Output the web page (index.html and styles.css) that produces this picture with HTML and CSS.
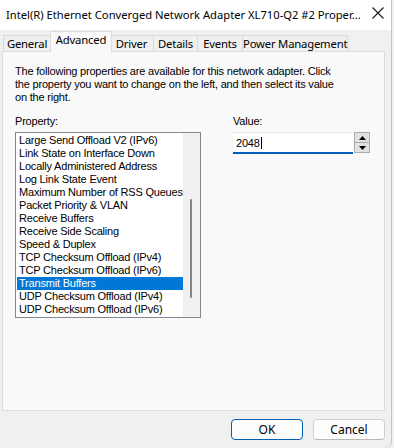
FILE: index.html
```html
<!DOCTYPE html>
<html lang="en">
<head>
    <meta charset="UTF-8">
    <title>Adapter Properties</title>
    <link rel="stylesheet" href="styles.css">
</head>
<body>
    <div class="window">
        <!-- Barra de titulo -->
        <div class="titlebar">
            <span class="title">Intel(R) Ethernet Converged Network Adapter XL710-Q2 #2 Proper...</span>
            <svg class="close" width="14" height="14" viewBox="0 0 14 14">
                <path d="M1.5 1.5 L12.5 12.5 M12.5 1.5 L1.5 12.5" stroke="#1a1a1a" stroke-width="1.1" fill="none"/>
            </svg>
        </div>

        <div class="dialog">
            <div class="tabs">
                <div class="tab tab-general">General</div>
                <div class="tab tab-advanced active">Advanced</div>
                <div class="tab tab-driver">Driver</div>
                <div class="tab tab-details">Details</div>
                <div class="tab tab-events">Events</div>
                <div class="tab tab-power">Power Management</div>
            </div>

            <div class="panel">
                <p class="intro">The following properties are available for this network adapter. Click<br>the property you want to change on the left, and then select its value<br>on the right.</p>

                <div class="fields">
                    <div class="prop-col">
                        <div class="label">Property:</div>
                        <div class="listbox">
                            <ul class="items">
                                <li>Large Send Offload V2 (IPv6)</li>
                                <li>Link State on Interface Down</li>
                                <li>Locally Administered Address</li>
                                <li>Log Link State Event</li>
                                <li>Maximum Number of RSS Queues</li>
                                <li>Packet Priority &amp; VLAN</li>
                                <li>Receive Buffers</li>
                                <li>Receive Side Scaling</li>
                                <li>Speed &amp; Duplex</li>
                                <li>TCP Checksum Offload (IPv4)</li>
                                <li>TCP Checksum Offload (IPv6)</li>
                                <li class="selected">Transmit Buffers</li>
                                <li>UDP Checksum Offload (IPv4)</li>
                                <li>UDP Checksum Offload (IPv6)</li>
                            </ul>
                            <div class="scrollbar"><div class="thumb"></div></div>
                        </div>
                    </div>

                    <div class="value-col">
                        <div class="label">Value:</div>
                        <div class="spin">
                            <div class="edit">2048<span class="caret"></span></div>
                            <div class="spin-btns">
                                <div class="spin-btn">
                                    <svg width="7" height="4" viewBox="0 0 7 4"><path d="M0 4 L3.5 0 L7 4 Z" fill="#000"/></svg>
                                </div>
                                <div class="spin-btn">
                                    <svg width="7" height="4" viewBox="0 0 7 4"><path d="M0 0 L7 0 L3.5 4 Z" fill="#000"/></svg>
                                </div>
                            </div>
                        </div>
                    </div>
                </div>
            </div>

            <div class="actions">
                <button class="btn primary">OK</button>
                <button class="btn">Cancel</button>
            </div>
        </div>
    </div>
</body>
</html>
```

FILE: styles.css
```css
body {
    margin: 0;
    background-color: #eef0f2;
    font-family: "Liberation Sans", Arial, sans-serif;
}

.window {
    width: 391px;
    height: 448px;
    background-color: #f0f0f0;
    border-right: 1px solid #c4c4c4;
    border-bottom-right-radius: 7px;
    overflow: hidden;
}

/* Barra de titulo */
.titlebar {
    height: 30px;
    background-color: #fff;
    display: flex;
    align-items: center;
    justify-content: space-between;
    padding: 0 6px 0 6px;
    font-family: "Noto Sans", sans-serif;
    font-size: 11.2px;
    color: #000;
}

.title {
    white-space: nowrap;
    margin-top: -2px;
}

.close {
    margin-right: 0;
    margin-top: -4px;
}

.dialog {
    padding: 0 0 0 2px;
}

/* Abas */
.tabs {
    display: flex;
    align-items: flex-end;
    height: 21px;
    padding-left: 1px;
    font-family: "Noto Sans", sans-serif;
    font-size: 11.3px;
    letter-spacing: -0.2px;
    position: relative;
    z-index: 1;
}

.tab {
    box-sizing: border-box;
    height: 16px;
    line-height: 15px;
    text-align: center;
    background-color: #f0f0f0;
    border: 1px solid #d9d9d9;
    border-bottom: none;
    margin-left: -1px;
    color: #000;
    white-space: nowrap;
}

.tab-general { width: 48px; margin-left: 0; }
.tab-advanced { width: 62px; }
.tab-driver { width: 45px; }
.tab-details { width: 45px; }
.tab-events { width: 46px; }
.tab-power { width: 106px; }

.tab.active {
    height: 21px;
    line-height: 16px;
    background-color: #f9f9f9;
    border-color: #dcdcdc;
    margin: 0 -2px -1px -1px;
    position: relative;
    z-index: 2;
}

.panel {
    width: 381px;
    height: 358px;
    background-color: #f9f9f9;
    border: 1px solid #dcdcdc;
    font-size: 11px;
    letter-spacing: -0.2px;
    color: #000;
}

.intro {
    margin: 13px 0 0 12px;
    line-height: 13px;
    white-space: nowrap;
}

.fields {
    display: flex;
    margin: 11px 0 0 12px;
}

.label {
    line-height: 13px;
    margin-bottom: 4px;
}

.prop-col {
    width: 186px;
}

.listbox {
    height: 184px;
    border: 1px solid #828790;
    background-color: #fff;
    display: flex;
}

.items {
    list-style: none;
    margin: 1px 0 0 1px;
    padding: 0;
    flex-grow: 1;
}

.items li {
    height: 13px;
    line-height: 13px;
    padding-left: 2px;
    white-space: nowrap;
    overflow: hidden;
}

.items li.selected {
    background-color: #0078d7;
    color: #fff;
}

.scrollbar {
    width: 17px;
    background-color: #f0f0f0;
    position: relative;
}

.thumb {
    position: absolute;
    left: 7px;
    top: 66px;
    width: 2px;
    height: 99px;
    border-radius: 1px;
    background-color: #858585;
}

.value-col {
    margin-left: 32px;
}

.spin {
    display: flex;
    height: 21px;
}

.edit {
    width: 117px;
    height: 19px;
    background-color: #fff;
    border-top: 1px solid #e5e5e5;
    border-bottom: 2px solid #005fb8;
    padding-left: 3px;
    font-size: 11px;
    display: flex;
    align-items: center;
}

.caret {
    display: inline-block;
    width: 1px;
    height: 12px;
    background-color: #000;
    margin-left: 1px;
}

.spin-btns {
    width: 16px;
    margin-left: 1px;
    display: flex;
    flex-direction: column;
    border: 1px solid #adadad;
    box-sizing: border-box;
    height: 21px;
}

.spin-btn {
    flex: 1;
    background-color: #e1e1e1;
    display: flex;
    align-items: center;
    justify-content: center;
}

.spin-btn + .spin-btn {
    border-top: 1px solid #adadad;
}

/* Botoes */
.actions {
    display: flex;
    justify-content: flex-end;
    gap: 10px;
    margin-top: 8px;
    width: 383px;
}

.btn {
    width: 72px;
    height: 21px;
    background-color: #fdfdfd;
    border: 1px solid #d0d0d0;
    border-bottom-color: #b8b8b8;
    border-radius: 4px;
    font-family: "Noto Sans", sans-serif;
    font-size: 12px;
    color: #000;
    padding: 0;
}

.btn.primary {
    border: 1px solid #005fb8;
}
```
